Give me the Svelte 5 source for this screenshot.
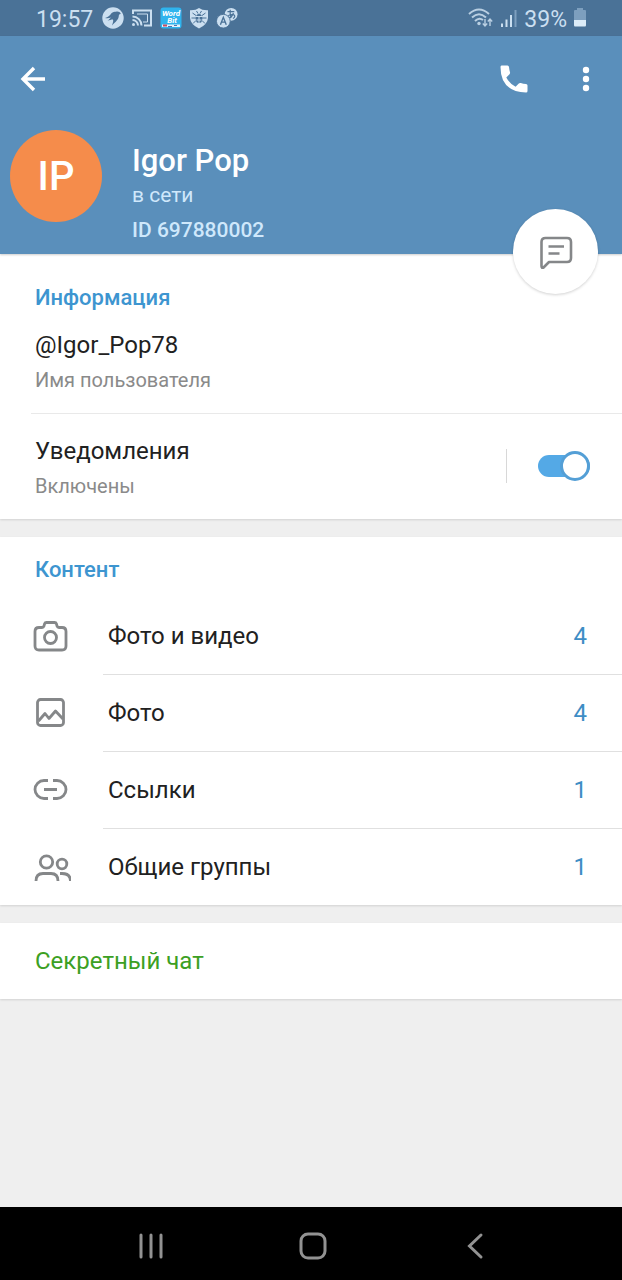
<script>
  let notifications = $state(true);

  const content = [
    { icon: 'camera', label: 'Фото и видео', count: 4 },
    { icon: 'photo', label: 'Фото', count: 4 },
    { icon: 'link', label: 'Ссылки', count: 1 },
    { icon: 'groups', label: 'Общие группы', count: 1 }
  ];
</script>

<div class="screen">
  <div class="status">
    <div class="status-group">
      <span class="time">19:57</span>
      <svg width="22" height="22" viewBox="0 0 22 22" aria-hidden="true">
        <circle cx="11" cy="11" r="10.7" fill="#cbdff0" />
        <path d="M3 11C5 10.500 7 9.500 8.500 7.500C10 5 12 4.300 14 4.800C16 4.200 18 5 18.800 7C17.500 6.800 16.800 7.500 16.800 9C16.500 12.500 14 14.500 10 18.500C11 15.500 11.500 14 11 12.500C9 12.500 7.500 13 5.500 14C7 12.500 8 11.500 9 10.500C7 11.300 5 11.500 3 11Z" fill="#4a7297" />
      </svg>
      <svg width="22" height="22" viewBox="0 0 22 22" fill="none" stroke="#cbdff0" stroke-width="2" aria-hidden="true">
        <path d="M2 7V3.500H20V18.500H13" />
        <path d="M1.500 9.500a9 9 0 0 1 9 9M1.500 13a5.500 5.500 0 0 1 5.500 5.500" />
        <circle cx="2.500" cy="17.500" r="1.500" fill="#cbdff0" stroke="none" />
        <path d="M6 7H16.500V15H12" stroke-width="1" />
      </svg>
      <svg width="22" height="22" viewBox="0 0 22 22" aria-hidden="true">
        <rect x="0.500" y="0.500" width="21" height="21" rx="3" fill="#2fb4ee" />
        <text x="11" y="8.500" text-anchor="middle" class="badge">Word</text>
        <text x="12" y="15.500" text-anchor="middle" class="badge">Bit</text>
        <path d="M2 17.500H20V20H2Z" fill="#e5f2fa" />
        <path d="M3 17.500H7V19.500H3Z" fill="#c44b62" />
        <path d="M8 19H12V20H8ZM14 18H17V19H14Z" fill="#536fac" />
      </svg>
      <svg width="20" height="22" viewBox="1 0 20 22" aria-hidden="true">
        <path d="M11 1Q14 3.500 20 3.300V11Q19.500 17.500 11 21.500 2.500 17.500 2 11V3.300Q8 3.500 11 1Z" fill="#cbdff0" />
        <path d="M4.500 6 8 8.500M17.500 6 14 8.500M3.500 11H18.500M5 16.500 8 13.500M17 16.500 14 13.500M8.500 4 10 6.500M13.500 4 12 6.500" stroke="#4a7297" fill="none" />
        <ellipse cx="11" cy="11.500" rx="3.300" ry="4.500" fill="#4a7297" />
        <path d="M8 9.500H14M11 10V16M8.500 13H13.500" stroke="#cbdff0" stroke-width="1" />
      </svg>
      <svg width="22" height="22" viewBox="0 0 24 24" aria-hidden="true">
        <circle cx="16.500" cy="8" r="7" fill="#cbdff0" />
        <path d="M12.500 5H20M15.500 3Q15 8 16.500 12M19 6.500Q17.500 11.500 14 11.500 12 10 15.500 8.500 20 7.500 20.500 10 20.500 11.500 18.500 12.500" fill="none" stroke="#4a7297" stroke-width="1.300" />
        <circle cx="8" cy="15.500" r="7.500" fill="#cbdff0" stroke="#4a7297" />
        <path d="M4.800 19.300 8 11.300 11.200 19.300M6 16.500H10" fill="none" stroke="#4a7297" stroke-width="1.500" />
      </svg>
    </div>
    <div class="status-group right">
      <svg width="26" height="22" viewBox="0 0 26 22" fill="none" stroke="#b9cfe2" stroke-width="2" aria-hidden="true">
        <path d="M1 7Q11-2 21 7M4 10.500Q11 4 18 10.500M7 14Q11 10 15 13" />
        <circle cx="11" cy="16.500" r="1.700" fill="#b9cfe2" stroke="none" />
        <path d="M17 12V19M14.800 16.500 17 19 19.200 16.500M22 19V12M19.800 14.500 22 12 24.200 14.500" stroke-width="1.400" />
      </svg>
      <svg width="18" height="22" viewBox="0 0 18 22" aria-hidden="true">
        <path d="M1 16.500H3V20H1ZM5.500 12.500H7.500V20H5.500ZM10 8H12V20H10Z" fill="#cbdff0" />
        <path d="M14.500 3H16.500V20H14.500Z" fill="#7d9fbe" />
      </svg>
      <span class="battery-level">39%</span>
      <svg width="14" height="22" viewBox="0 0 14 22" aria-hidden="true">
        <path d="M4 1H10V3H12Q13 3 13 4V13H1V4Q1 3 2 3H4Z" fill="#7d9fbe" />
        <path d="M1 13H13V18Q13 19.500 12 19.500H2Q1 19.500 1 18Z" fill="#dcecf8" />
      </svg>
    </div>
  </div>

  <header>
    <div class="toolbar">
      <button class="icon-button" aria-label="Назад">
        <svg width="26" height="26" viewBox="0 0 26 26" fill="none" stroke="#fff" stroke-width="3.400" aria-hidden="true">
          <path d="M25 13H3M14 2 3 13 14 24" />
        </svg>
      </button>
      <span class="spacer"></span>
      <button class="icon-button" aria-label="Позвонить">
        <svg width="28" height="28" viewBox="0 0 28 28" aria-hidden="true">
          <path d="M1.500 .5H7.500Q8.800 .5 9 2 9.300 5 10 7.200 10.300 8.500 9.500 9.300L6.300 12.400Q9.500 18.500 15.600 21.700L18.800 18.500Q19.600 17.700 20.800 18.100 23.300 19 26 19 27.500 19.200 27.500 20.500V26Q27.500 27.500 26 27.500 .5 26.500 .5 2 .5 .5 1.500 .5Z" fill="#fff" />
        </svg>
      </button>
      <button class="icon-button" aria-label="Ещё">
        <svg width="8" height="26" viewBox="0 0 8 26" fill="#fff" aria-hidden="true">
          <circle cx="4" cy="4" r="3.200" /><circle cx="4" cy="13" r="3.200" /><circle cx="4" cy="22" r="3.200" />
        </svg>
      </button>
    </div>
    <div class="profile">
      <div class="avatar">IP</div>
      <div class="identity">
        <h1>Igor Pop</h1>
        <p class="online">в сети</p>
        <p class="user-id">ID 697880002</p>
      </div>
    </div>
    <button class="message" aria-label="Написать сообщение">
      <svg width="34" height="34" viewBox="0 0 34 34" fill="none" stroke="#858789" stroke-width="2.600" stroke-linecap="round" stroke-linejoin="round" aria-hidden="true">
        <path d="M6.500 3H28Q32 3 32 7V23Q32 27 28 27H10L4.500 32.500Q2.500 33.500 2.500 31V7Q2.500 3 6.500 3Z" />
        <path d="M9.500 11.500H25M9.500 18.500H20.500" stroke-linecap="butt" />
      </svg>
    </button>
  </header>

  <main>
    <section>
      <h2>Информация</h2>
      <div class="username">
        <div class="title">@Igor_Pop78</div>
        <div class="caption">Имя пользователя</div>
      </div>
      <div class="alerts">
        <label for="notifications">
          <span class="title">Уведомления</span>
          <span class="caption">{notifications ? 'Включены' : 'Отключены'}</span>
        </label>
        <span class="toggle">
          <input id="notifications" type="checkbox" role="switch" bind:checked={notifications} />
        </span>
      </div>
    </section>

    <section>
      <h2 class="content-title">Контент</h2>
      <ul>
        {#each content as item}
          <li>
            <button class="row">
              <span class="row-icon">
                <svg width="38" height="36" viewBox="0 0 38 36" fill="none" stroke="#858789" stroke-width="2.800" stroke-linejoin="round" aria-hidden="true">
                  {#if item.icon === 'camera'}
                    <path d="M6 8.500H9Q10.500 8.500 11 7L11.500 5Q12 3.500 13.500 3.500H21.500Q23 3.500 23.500 5L24 7Q24.500 8.500 26 8.500H29Q33 8.500 33 12.500V27Q33 31 29 31H6Q2 31 2 27V12.500Q2 8.500 6 8.500Z" />
                    <circle cx="17.500" cy="18.500" r="6" />
                  {:else if item.icon === 'photo'}
                    <rect x="4.500" y="3.500" width="26" height="26" rx="3" />
                    <path d="M5.500 25 12 17.500 16 22.500 22.500 15 30 23" />
                  {:else if item.icon === 'link'}
                    <path d="M15 7.500H11A9 9 0 0 0 11 25.500H15M20 7.500H24A9 9 0 0 1 24 25.500H20M11 16.500H24" />
                  {:else}
                    <circle cx="13.500" cy="13" r="6.200" />
                    <circle cx="29" cy="15" r="4.800" />
                    <path d="M3 32C3 26.500 6 24.500 10 24.500H18C22.500 24.500 25 27 25 32M27 24.500H29C34.500 24.500 37.500 27 37.500 32" />
                  {/if}
                </svg>
              </span>
              <span class="row-body">
                <span class="title">{item.label}</span>
                <span class="count">{item.count}</span>
              </span>
            </button>
          </li>
        {/each}
      </ul>
    </section>

    <section>
      <button class="secret">Секретный чат</button>
    </section>
  </main>

  <nav>
    <button aria-label="Недавние приложения">
      <svg width="28" height="28" viewBox="0 0 28 28" fill="none" stroke="#929292" stroke-width="3" stroke-linecap="round" aria-hidden="true">
        <path d="M4 3V25M14 3V25M24 3V25" />
      </svg>
    </button>
    <button aria-label="Домой">
      <svg width="28" height="28" viewBox="0 0 28 28" fill="none" stroke="#929292" stroke-width="3" aria-hidden="true">
        <rect x="2" y="2" width="24" height="24" rx="7" />
      </svg>
    </button>
    <button aria-label="Назад">
      <svg width="28" height="28" viewBox="0 0 28 28" fill="none" stroke="#929292" stroke-width="3" stroke-linecap="round" aria-hidden="true">
        <path d="M20 3 8.500 14 20 25" />
      </svg>
    </button>
  </nav>
</div>

<style>
  :global(body) {
    margin: 0;
    background: #efefef;
  }

  .screen {
    display: flex;
    flex-direction: column;
    min-height: 100vh;
    font-family: Roboto, sans-serif;
    color: #212121;
  }

  button {
    margin: 0;
    padding: 0;
    border: 0;
    background: none;
    font: inherit;
    color: inherit;
    cursor: pointer;
  }

  svg {
    display: block;
    flex: none;
  }

  h1, h2, p, ul {
    margin: 0;
    padding: 0;
  }

  .status {
    display: flex;
    justify-content: space-between;
    align-items: center;
    height: 36px;
    padding: 0 35px 0 36px;
    background: #4a7297;
    color: #cbdff0;
    font-size: 23px;
    line-height: 28px;
  }

  .status-group {
    display: flex;
    align-items: center;
    gap: 7px;
  }

  .right {
    gap: 6px;
  }

  .time,
  .battery-level {
    padding-top: 3px;
  }

  .time {
    padding-right: 2px;
  }

  .badge {
    font: italic 700 8px Roboto, sans-serif;
    fill: #fff;
  }

  header {
    position: relative;
    height: 218px;
    background: #5a8fbb;
    box-shadow: 0 1px 2px rgba(0, 0, 0, 0.2);
    z-index: 1;
  }

  .toolbar {
    display: flex;
    align-items: center;
    height: 85px;
    padding: 0 8px;
  }

  .spacer {
    flex: 1;
  }

  .icon-button {
    display: grid;
    place-items: center;
    width: 50px;
    height: 50px;
  }

  .icon-button:last-child {
    margin-left: 22px;
    margin-right: 3px;
  }

  .profile {
    display: flex;
    gap: 30px;
    padding: 9px 10px;
  }

  .avatar {
    display: grid;
    place-items: center;
    width: 92px;
    height: 92px;
    border-radius: 50%;
    background: #f58c4b;
    color: #fff;
    font-size: 40px;
    font-weight: 500;
  }

  .identity {
    padding-top: 13px;
    color: #cfe8fb;
    font-size: 21px;
  }

  h1 {
    color: #fff;
    font-size: 31px;
    font-weight: 500;
    line-height: 36px;
  }

  .online {
    line-height: 32px;
  }

  .user-id {
    font-weight: 500;
    line-height: 38px;
  }

  .message {
    position: absolute;
    right: 24px;
    bottom: -40px;
    display: grid;
    place-items: center;
    width: 85px;
    height: 85px;
    border-radius: 50%;
    background: #fff;
    box-shadow: 0 1px 3px rgba(0, 0, 0, 0.18);
  }

  main {
    display: flex;
    flex: 1;
    flex-direction: column;
    gap: 18px;
  }

  section {
    background: #fff;
    box-shadow: 0 1px 2px rgba(0, 0, 0, 0.12);
  }

  h2 {
    padding: 29px 35px 13px;
    color: #3d95d0;
    font-size: 22px;
    font-weight: 500;
    line-height: 30px;
  }

  .content-title {
    padding-top: 18px;
  }

  .title {
    display: block;
    font-size: 24px;
    line-height: 36px;
  }

  .caption {
    display: block;
    color: #8a8a8a;
    font-size: 20px;
    line-height: 34px;
  }

  .username {
    margin-left: 31px;
    padding: 1px 4px 16px;
    border-bottom: 1px solid #e9e9e9;
  }

  .alerts {
    display: flex;
    align-items: center;
    padding: 19px 32px 16px 35px;
  }

  .alerts label {
    flex: 1;
  }

  .toggle {
    display: flex;
    align-items: center;
    height: 34px;
    margin-bottom: 4px;
    padding-left: 31px;
    border-left: 1px solid #d8d8d8;
  }

  input {
    appearance: none;
    display: flex;
    align-items: center;
    width: 52px;
    height: 22px;
    margin: 0;
    border-radius: 11px;
    background: #b0b5ba;
  }

  input::before {
    content: '';
    box-sizing: border-box;
    width: 30px;
    height: 30px;
    flex: none;
    border: 3px solid #b0b5ba;
    border-radius: 50%;
    background: #fff;
  }

  input:checked {
    justify-content: flex-end;
    background: #54a9e6;
  }

  input:checked::before {
    border-color: #549fd6;
  }

  ul {
    list-style: none;
  }

  .row {
    display: flex;
    align-items: center;
    width: 100%;
    text-align: left;
  }

  .row-icon {
    width: 70px;
    padding-left: 33px;
  }

  .row-body {
    display: flex;
    flex: 1;
    align-items: center;
    justify-content: space-between;
    height: 76px;
    padding: 0 35px 0 5px;
    border-bottom: 1px solid #e0e0e0;
  }

  li:last-child .row-body {
    border-bottom: 0;
  }

  .count {
    color: #3d8dc5;
    font-size: 24px;
  }

  .secret {
    width: 100%;
    padding: 20px 35px;
    color: #3ca023;
    font-size: 24px;
    line-height: 36px;
    text-align: left;
  }

  nav {
    display: flex;
    box-sizing: border-box;
    justify-content: center;
    gap: 134px;
    height: 73px;
    padding: 4px 0 0 4px;
    background: #000;
  }

  nav button {
    display: grid;
    place-items: center;
  }
</style>
